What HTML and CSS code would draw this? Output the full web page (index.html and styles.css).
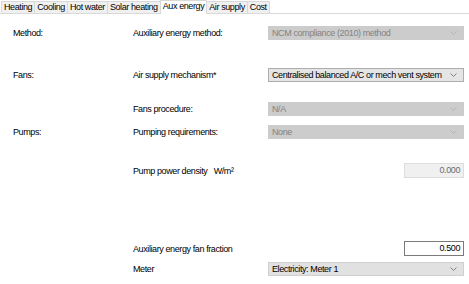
FILE: index.html
```html
<!DOCTYPE html>
<html lang="en">

<head>
    <meta charset="UTF-8" />
    <title>Aux energy</title>
    <link rel="stylesheet" href="styles.css">
</head>

<body>
    <div class="tabs">
        <span class="tab">Heating</span>
        <span class="tab">Cooling</span>
        <span class="tab">Hot water</span>
        <span class="tab">Solar heating</span>
        <span class="tab active">Aux energy</span>
        <span class="tab">Air supply</span>
        <span class="tab">Cost</span>
    </div>

    <div class="panel">
        <div class="row r-method">
            <div class="group">Method:</div>
            <div class="label">Auxiliary energy method:</div>
            <div class="combo disabled">NCM compliance (2010) method<svg class="arrow" width="7" height="4" viewBox="0 0 7 4"><path d="M0.5 0.5 L3.5 3.5 L6.5 0.5" /></svg></div>
        </div>
        <div class="row r-fans">
            <div class="group">Fans:</div>
            <div class="label">Air supply mechanism*</div>
            <div class="combo">Centralised balanced A/C or mech vent system<svg class="arrow" width="7" height="4" viewBox="0 0 7 4"><path d="M0.5 0.5 L3.5 3.5 L6.5 0.5" /></svg></div>
        </div>
        <div class="row r-proc">
            <div class="group"></div>
            <div class="label">Fans procedure:</div>
            <div class="combo disabled">N/A<svg class="arrow" width="7" height="4" viewBox="0 0 7 4"><path d="M0.5 0.5 L3.5 3.5 L6.5 0.5" /></svg></div>
        </div>
        <div class="row r-pumps">
            <div class="group">Pumps:</div>
            <div class="label">Pumping requirements:</div>
            <div class="combo disabled">None<svg class="arrow" width="7" height="4" viewBox="0 0 7 4"><path d="M0.5 0.5 L3.5 3.5 L6.5 0.5" /></svg></div>
        </div>
        <div class="row r-density">
            <div class="group"></div>
            <div class="label">Pump power density&nbsp;&nbsp; W/m²</div>
            <div class="field"><span class="num disabled">0.000</span></div>
        </div>
        <div class="row r-frac">
            <div class="group"></div>
            <div class="label">Auxiliary energy fan fraction</div>
            <div class="field"><span class="num">0.500</span></div>
        </div>
        <div class="row r-meter">
            <div class="group"></div>
            <div class="label">Meter</div>
            <div class="combo plain">Electricity: Meter 1<svg class="arrow" width="7" height="4" viewBox="0 0 7 4"><path d="M0.5 0.5 L3.5 3.5 L6.5 0.5" /></svg></div>
        </div>
    </div>
</body>

</html>
```

FILE: styles.css
```css
* {
    font-family: "Liberation Sans", Arial, sans-serif;
    box-sizing: border-box;
}

body {
    margin: 0;
    padding: 0;
    background: #ffffff;
    color: #000000;
    font-size: 9px;
    letter-spacing: -0.4px;
}

.tabs {
    display: flex;
    padding: 2px 0 0 1px;
    height: 14px;
    border-bottom: 1px solid #d9d9d9;
    align-items: flex-end;
}

.tab {
    height: 12px;
    line-height: 11px;
    padding: 0 2px;
    background: #f0f0f0;
    border: 1px solid #d9d9d9;
    border-bottom: none;
    margin-right: -1px;
    white-space: nowrap;
}

.tab.active {
    background: #ffffff;
    height: 14px;
    line-height: 10px;
    margin-bottom: -1px;
    position: relative;
}

.panel {
    padding-left: 13px;
}

.row {
    display: flex;
    align-items: center;
    height: 15px;
    white-space: nowrap;
}

.group {
    width: 120px;
    flex: none;
}

.label {
    width: 135px;
    flex: none;
}

.combo {
    flex: none;
    width: 196px;
    height: 14px;
    line-height: 12px;
    padding: 0 3px;
    border: 1px solid #adadad;
    background: #e5e5e5;
    position: relative;
    overflow: hidden;
}

.combo.disabled {
    background: #cccccc;
    border-color: #cccccc;
    color: #838383;
}

.combo.plain {
    background: #e1e1e1;
    border-color: #d0d0d0;
}

.arrow {
    position: absolute;
    right: 6px;
    top: 4px;
    fill: none;
    stroke: #808080;
    stroke-width: 1;
}

.combo.disabled .arrow {
    stroke: #b4b4b4;
}

.field {
    flex: none;
    width: 196px;
    display: flex;
    justify-content: flex-end;
}

.num {
    width: 60px;
    height: 15px;
    line-height: 13px;
    text-align: right;
    padding-right: 3px;
    border: 1px solid #7a7a7a;
    background: #ffffff;
}

.num.disabled {
    background: #f0f0f0;
    border-color: #dddddd;
    color: #6d6d6d;
}

.r-method {
    margin-top: 11px;
}

.r-fans {
    margin-top: 27px;
}

.r-proc {
    margin-top: 19px;
}

.r-pumps {
    margin-top: 8px;
}

.r-density {
    margin-top: 24px;
}

.r-frac {
    margin-top: 63px;
}

.r-meter {
    margin-top: 5px;
}
```
